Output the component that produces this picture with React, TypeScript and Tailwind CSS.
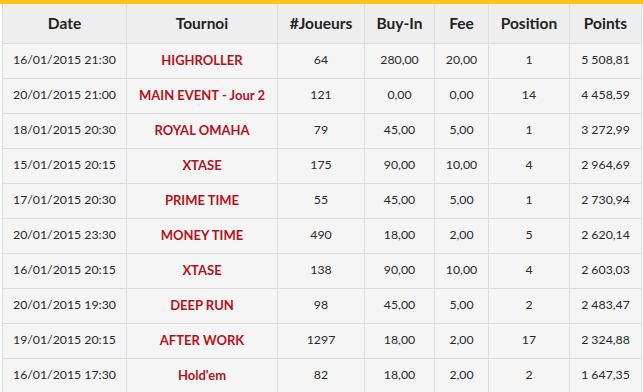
const rows = [
  ["16/01/2015 21:30", "HIGHROLLER", "64", "280,00", "20,00", "1", "5\u202f508,81"],
  ["20/01/2015 21:00", "MAIN EVENT - Jour 2", "121", "0,00", "0,00", "14", "4\u202f458,59"],
  ["18/01/2015 20:30", "ROYAL OMAHA", "79", "45,00", "5,00", "1", "3\u202f272,99"],
  ["15/01/2015 20:15", "XTASE", "175", "90,00", "10,00", "4", "2\u202f964,69"],
  ["17/01/2015 20:30", "PRIME TIME", "55", "45,00", "5,00", "1", "2\u202f730,94"],
  ["20/01/2015 23:30", "MONEY TIME", "490", "18,00", "2,00", "5", "2\u202f620,14"],
  ["16/01/2015 20:15", "XTASE", "138", "90,00", "10,00", "4", "2\u202f603,03"],
  ["20/01/2015 19:30", "DEEP RUN", "98", "45,00", "5,00", "2", "2\u202f483,47"],
  ["19/01/2015 20:15", "AFTER WORK", "1297", "18,00", "2,00", "17", "2\u202f324,88"],
  ["16/01/2015 17:30", "Hold'em", "82", "18,00", "2,00", "2", "1\u202f647,35"],
];

const headers = ["Date", "Tournoi", "#Joueurs", "Buy-In", "Fee", "Position", "Points"];
const widths = ["w-[124px]", "w-[151px]", "w-[87px]", "w-[70px]", "w-[54px]", "w-[81px]", "w-[72px]"];

export default function App() {
  return (
    <div className="w-[643px] h-[392px] bg-white px-[2px] font-['Lato','Liberation_Sans',sans-serif]">
      <div className="h-[4px] bg-[#fec315] -mx-[2px]" />
      <table className="border-collapse table-fixed w-[639px]">
        <thead>
          <tr className="h-[39px] bg-[#eeeeee]">
            {headers.map((h, i) => (
              <th key={h} className={`${widths[i]} border-x border-b border-[#dddddd] text-center text-[15.5px] font-bold text-[#222222]`}>
                {h}
              </th>
            ))}
          </tr>
        </thead>
        <tbody>
          {rows.map((r, ri) => (
            <tr key={ri} className="h-[35px] bg-[#f5f5f5]">
              {r.map((c, ci) => (
                <td
                  key={ci}
                  className={
                    ci === 1
                      ? "border border-[#dddddd] text-center text-[13px] font-bold text-[#b5121b]"
                      : "border border-[#dddddd] text-center text-[12.3px] text-[#2a2a2a]"
                  }
                >
                  {c}
                </td>
              ))}
            </tr>
          ))}
        </tbody>
      </table>
    </div>
  );
}
